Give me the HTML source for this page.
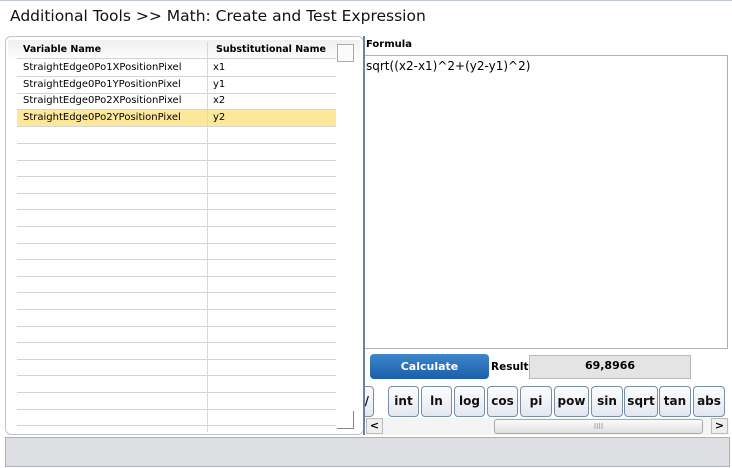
<!DOCTYPE html><html><head><style>
*{margin:0;padding:0;box-sizing:border-box}
body{width:732px;height:468px;background:#fff;font-family:"DejaVu Sans","Liberation Sans",sans-serif;position:relative;overflow:hidden}
.a{position:absolute;white-space:nowrap}
.hdr{left:0;top:0;width:732px;height:33px;border-top:1px solid #c0c8d4;font-size:15.5px;padding:6px 0 0 10px;color:#111}
.lp{left:5px;top:36px;width:359px;height:399px;border:1px solid #bcc4cc;border-radius:6px;background:#fff}
.row{position:absolute;left:17px;width:319px;height:17px;border-bottom:1px solid #d4d4d4;font-size:10px;line-height:16px;white-space:nowrap}
.row span{position:absolute}
.vl{left:207px;top:42px;width:1px;height:390px;background:#d8d8d8}
.btn{position:absolute;top:0;height:31px;border:1px solid #7a8fa6;border-radius:4px;background:linear-gradient(#fdfdfe,#e2e8f0);font-weight:bold;font-size:12px;text-align:center;line-height:29px;color:#111}
</style></head><body>
<div class="a hdr">Additional Tools &gt;&gt; Math: Create and Test Expression</div>
<div class="a lp"></div>
<div class="a" style="left:8px;top:40px;width:352px;height:22px;background:linear-gradient(#f0f0f0,#fff)"></div>
<div class="row" style="top:42px;font-weight:bold;font-size:9.5px"><span style="left:6px">Variable Name</span><span style="left:199px">Substitutional Name</span></div>
<div class="a" style="left:337px;top:44px;width:17px;height:18px;border:1px solid #aaa;background:#fbfbfb"></div>
<div class="row" style="top:60px"><span style="left:6px">StraightEdge0Po1XPositionPixel</span><span style="left:196px">x1</span></div>
<div class="row" style="top:77px"><span style="left:6px">StraightEdge0Po1YPositionPixel</span><span style="left:196px">y1</span></div>
<div class="row" style="top:93px"><span style="left:6px">StraightEdge0Po2XPositionPixel</span><span style="left:196px">x2</span></div>
<div class="row" style="top:110px;background:#fce79a"><span style="left:6px">StraightEdge0Po2YPositionPixel</span><span style="left:196px">y2</span></div>
<div id="lines"></div>
<div class="a vl"></div>
<div class="a" style="left:337px;top:411px;width:17px;height:18px;border-right:1px solid #888;border-bottom:1px solid #888"></div>
<div class="a" style="left:363px;top:36px;width:2px;height:399px;background:#7080a0"></div>
<div class="a" style="left:366px;top:39px;font-weight:bold;font-size:10px">Formula</div>
<div class="a" style="left:365px;top:55px;width:363px;height:294px;border:1px solid #b0b0b0;border-left:none;font-size:12px;padding:3px 0 0 1px">sqrt((x2-x1)^2+(y2-y1)^2)</div>
<div class="a" style="left:370px;top:354px;width:119px;height:25px;border-radius:4px;background:linear-gradient(#3f86cc,#1a5ea8);color:#fff;font-weight:bold;font-size:11px;text-align:center;line-height:25px">Calculate</div>
<div class="a" style="left:491px;top:361px;font-weight:bold;font-size:10.5px">Result</div>
<div class="a" style="left:529px;top:355px;width:162px;height:24px;background:#e4e4e4;border:1px solid #b8b8b8;font-weight:bold;font-size:11px;text-align:center;line-height:20px">69,8966</div>
<div class="a" style="left:365px;top:386px;width:364px;height:32px;overflow:hidden">
<div class="btn" style="left:-10px;width:19px;text-align:right;padding-right:4px">/</div>
<div class="btn" style="left:23px;width:31px">int</div>
<div class="btn" style="left:56px;width:31px">ln</div>
<div class="btn" style="left:89px;width:31px">log</div>
<div class="btn" style="left:122px;width:31px">cos</div>
<div class="btn" style="left:155px;width:32px">pi</div>
<div class="btn" style="left:189px;width:35px">pow</div>
<div class="btn" style="left:226px;width:32px">sin</div>
<div class="btn" style="left:259px;width:34px">sqrt</div>
<div class="btn" style="left:294px;width:32px">tan</div>
<div class="btn" style="left:328px;width:32px">abs</div>
</div>
<div class="a" style="left:366px;top:418px;width:363px;height:17px;background:#f4f4f4"></div>
<div class="a" style="left:366px;top:418px;width:17px;height:16px;border:1px solid #bbb;background:#eee;font-size:11px;font-weight:bold;text-align:center;line-height:14px">&lt;</div>
<div class="a" style="left:494px;top:419px;width:209px;height:15px;border:1px solid #aaa;border-radius:3px;background:linear-gradient(#fbfbfb,#e0e0e0);font-size:8px;text-align:center;color:#999;line-height:13px">IIII</div>
<div class="a" style="left:711px;top:418px;width:17px;height:16px;border:1px solid #bbb;background:#eee;font-size:11px;font-weight:bold;text-align:center;line-height:14px">&gt;</div>
<div class="a" style="left:5px;top:437px;width:725px;height:30px;background:#dedfe3;border:1px solid #a8b0bc"></div>
<script>
var h='';for(var y=143;y<430;y+=16.6){h+='<div class="a" style="left:17px;top:'+Math.round(y)+'px;width:319px;height:1px;background:#d4d4d4"></div>';}
document.getElementById('lines').innerHTML=h;
</script>
</body></html>
